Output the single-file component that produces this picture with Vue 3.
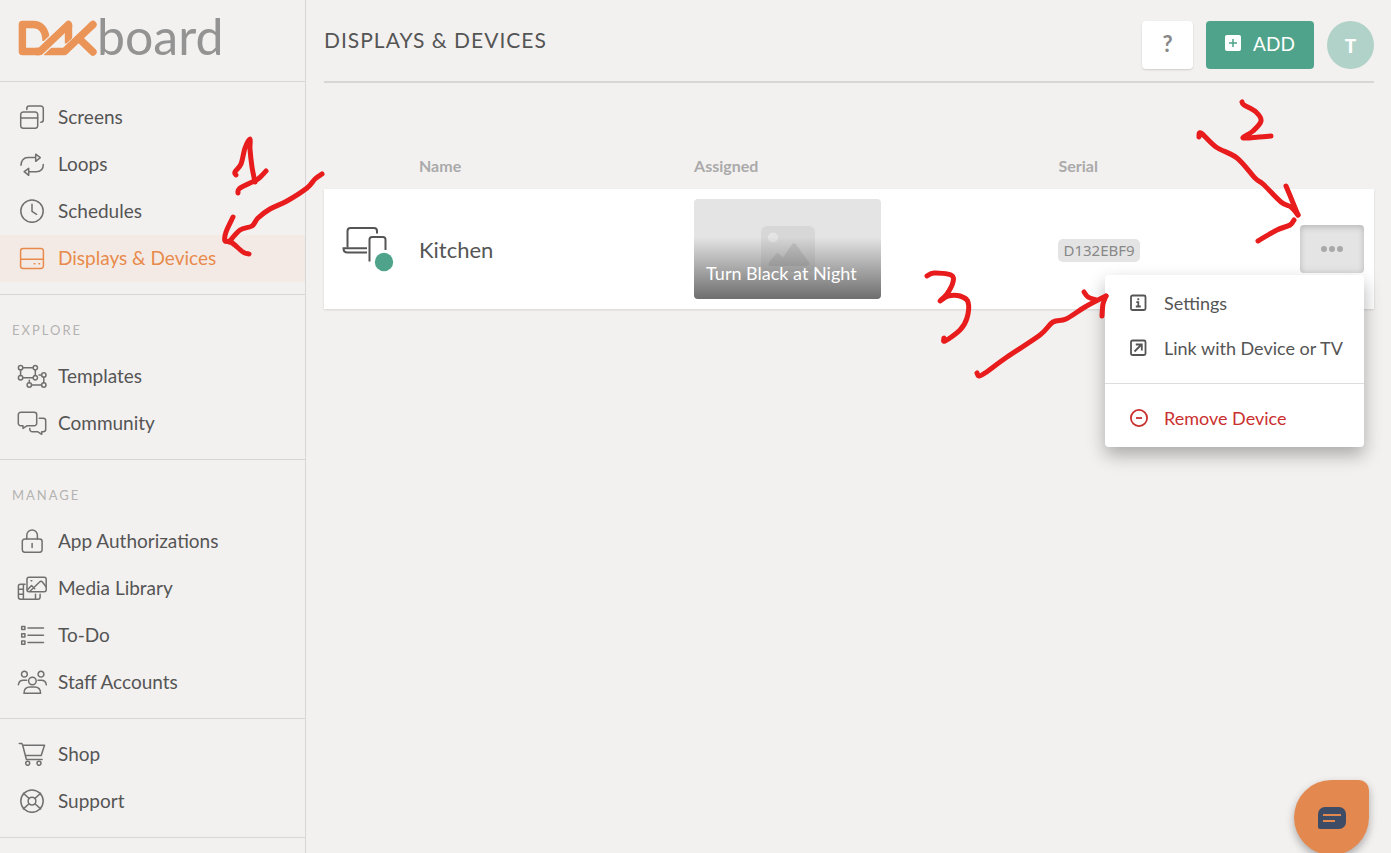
<script setup>
import { ref } from 'vue'

const groups = [
  {
    title: '',
    items: [
      {
        label: 'Screens',
        icon: [
          'M6.2 7h12a2.5 2.5 0 0 1 2.5 2.5v11.300a2.500 2.500 0 0 1-2.500 2.500h-12a2.500 2.500 0 0 1-2.500-2.500v-11.300a2.500 2.500 0 0 1 2.500-2.500z',
          'M3.700 13h17M9.800 4.500v-1a2.500 2.500 0 0 1 2.500-2.500h11.500a2.500 2.500 0 0 1 2.500 2.500v11.300a2.500 2.500 0 0 1-2.500 2.500'
        ]
      },
      {
        label: 'Loops',
        icon: [
          'M4 13.200c0-4.700 2.600-7.600 7-7.600h7.700M18.700 2.200l4.600 3.400l-4.600 3.700z',
          'M26.300 12.500c0 4.500-2.700 7.200-7 7.200h-7.500M11.700 16.300l-4.500 3.400l4.500 3.600z'
        ]
      },
      {
        label: 'Schedules',
        icon: ['M15 .9a11.200 11.200 0 1 0 0 22.400a11.200 11.200 0 1 0 0-22.400z', 'M15 5.300v7l4.600 3']
      },
      {
        label: 'Displays & Devices',
        active: true,
        icon: [
          'M6 2.600h18a2.400 2.400 0 0 1 2.400 2.400v15a2.400 2.400 0 0 1-2.400 2.400h-18a2.400 2.400 0 0 1-2.400-2.400v-15a2.400 2.400 0 0 1 2.400-2.400zM3.700 13.300h22.600',
          'M17.200 17.800h.7M21.900 17.800h.7'
        ]
      }
    ]
  },
  {
    title: 'Explore',
    items: [
      {
        label: 'Templates',
        icon: [
          'M1.400 3.700a2.200 2.200 0 1 0 4.400 0a2.200 2.200 0 1 0-4.400 0zM16.100 3.700a2.200 2.200 0 1 0 4.400 0a2.200 2.200 0 1 0-4.400 0zM1.400 13.700a2.200 2.200 0 1 0 4.400 0a2.200 2.200 0 1 0-4.400 0zM16.100 13.700a2.200 2.200 0 1 0 4.400 0a2.200 2.200 0 1 0-4.400 0z',
          'M24.600 11a2.200 2.200 0 1 0 4.400 0a2.200 2.200 0 1 0-4.400 0zM10.100 21a2.200 2.200 0 1 0 4.400 0a2.200 2.200 0 1 0-4.400 0zM24.600 21a2.200 2.200 0 1 0 4.400 0a2.200 2.200 0 1 0-4.400 0z',
          'M5.900 3.700h10.100M5.900 13.700h10.100M3.600 6v5.400M18.300 6v5.400M26.800 13.300v5.400M14.600 21h9.900M22 11h2.500M12.300 18.700v-2.500'
        ]
      },
      {
        label: 'Community',
        icon: [
          'M3.800 1.300h13.400a2.500 2.500 0 0 1 2.500 2.500v8.400a2.500 2.500 0 0 1-2.500 2.500h-7l-4.200 2.700v-2.700h-2.200a2.500 2.500 0 0 1-2.500-2.500v-8.400a2.500 2.500 0 0 1 2.500-2.500z',
          'M22.300 7.300h3.900a2.500 2.500 0 0 1 2.500 2.500v8.400a2.500 2.500 0 0 1-2.500 2.500h-1.500v2.600l-4.200-2.600h-5.200a2.500 2.500 0 0 1-2.500-2.500v-.7'
        ]
      }
    ]
  },
  {
    title: 'Manage',
    items: [
      {
        label: 'App Authorizations',
        icon: [
          'M7.800 10h14.800a2.500 2.500 0 0 1 2.500 2.500v8.300a2.500 2.500 0 0 1-2.500 2.500h-14.800a2.500 2.500 0 0 1-2.500-2.500v-8.300a2.500 2.500 0 0 1 2.500-2.500z',
          'M9.800 10v-3.700a5.300 5.300 0 0 1 10.600 0v3.700M15.100 14.500v4'
        ]
      },
      {
        label: 'Media Library',
        icon: [
          'M12 1.300h15.200a2 2 0 0 1 2 2v10.400a2 2 0 0 1-2 2h-15.200a2 2 0 0 1-2-2v-10.400a2 2 0 0 1 2-2z',
          'M10.500 13.800l4-4.300l3.200 3.300M13 15.300l9.300-9c1.200-1.300 2.200-1.300 3.300 0l3.400 4.500M14.100 4.700h.7',
          'M8 8.200h-4.500a2.100 2.100 0 0 0-2.100 2.100v10.800a2.100 2.100 0 0 0 2.100 2.100h17.500a2.100 2.100 0 0 0 2.100-2.100v-2.900M6.400 8.200v15M18.500 18.200v5M1.400 13.200h5M1.400 18.200h5'
        ]
      },
      {
        label: 'To-Do',
        icon: [
          'M4.700 3.400h3.200v3.200h-3.200zM4.700 10.700h3.200v3.200h-3.200zM4.700 18h3.200v3.200h-3.200z',
          'M11 5h15.500M11 12.300h15.500M11 19.600h15.500'
        ]
      },
      {
        label: 'Staff Accounts',
        icon: [
          'M4.500 4.200a2.900 2.900 0 1 0 5.800 0a2.900 2.900 0 1 0-5.800 0zM21.100 4.200a2.900 2.900 0 1 0 5.800 0a2.900 2.900 0 1 0-5.800 0zM11.600 11a3.800 3.800 0 1 0 7.600 0a3.800 3.800 0 1 0-7.600 0z',
          'M1.400 14.800c.3-3 2.300-4.500 5-4.500h3.300M29.300 14.800c-.3-3-2.300-4.500-5-4.500h-3.300M7 23.300c0-4 2.500-6.300 6-6.300h4.500c3.600 0 6.100 2.300 6.100 6.300z'
        ]
      }
    ]
  },
  {
    title: '',
    items: [
      {
        label: 'Shop',
        icon: [
          'M2.300 1.500h2.600l.8 1.700l3.700 14.300h15.700M5.700 3.200h21.800l-3.300 10.200h-15.800',
          'M8.700 21.300a2 2 0 1 0 4 0a2 2 0 1 0-4 0zM20 21.300a2 2 0 1 0 4 0a2 2 0 1 0-4 0z'
        ]
      },
      {
        label: 'Support',
        icon: [
          'M15 .9a11.200 11.200 0 1 0 0 22.400a11.200 11.200 0 1 0 0-22.400zM15 8.200a3.900 3.900 0 1 0 0 7.800a3.900 3.900 0 1 0 0-7.800z',
          'M6.400 4.300l5.600 5.100M23.600 4.300l-5.600 5.100M6.400 19.900l5.600-5.100M23.600 19.900l-5.600-5.100'
        ]
      }
    ]
  }
]

const devices = [{ name: 'Kitchen', assigned: 'Turn Black at Night', serial: 'D132EBF9' }]
const menuOpen = ref(true)

// Freehand notes drawn over the page, as sampled pen positions.
const strokes = [
  [[236, 175], [235, 172], [241, 164], [245, 148], [250, 139], [250, 149], [252, 167], [255, 182]],
  [[238, 193], [239, 189], [248, 184], [258, 179], [266, 171]],
  [[322, 174], [315, 179], [307, 188], [287, 201], [270, 209], [258, 218], [252, 226], [240, 230], [229, 242]],
  [[233, 217], [226, 232], [225, 241], [231, 242], [243, 252], [249, 254]],
  [[1242, 102], [1244, 105], [1256, 112], [1261, 121], [1253, 131], [1243, 138], [1259, 137], [1271, 136]],
  [[1199, 137], [1201, 133], [1216, 147], [1237, 158], [1255, 178], [1263, 184], [1281, 202], [1291, 207], [1298, 215]],
  [[1286, 186], [1291, 198], [1298, 215]],
  [[1294, 220], [1290, 225], [1277, 230], [1258, 241]],
  [[927, 276], [934, 273], [951, 275], [953, 282], [947, 294], [940, 301], [948, 296], [960, 296], [968, 302], [967, 318], [960, 330], [945, 341], [944, 338]],
  [[977, 373], [979, 376], [985, 373], [1007, 357], [1040, 335], [1053, 322], [1066, 319], [1085, 307], [1106, 296]],
  [[1084, 292], [1088, 297], [1096, 300]],
  [[1106, 296], [1103, 304], [1102, 316]]
]

function smooth(points) {
  let d = `M${points[0][0]} ${points[0][1]}`
  for (let i = 0; i < points.length - 1; i++) {
    const a = points[Math.max(i - 1, 0)]
    const b = points[i]
    const c = points[i + 1]
    const e = points[Math.min(i + 2, points.length - 1)]
    d += `C${b[0] + (c[0] - a[0]) / 6} ${b[1] + (c[1] - a[1]) / 6} ${c[0] - (e[0] - b[0]) / 6} ${c[1] - (e[1] - b[1]) / 6} ${c[0]} ${c[1]}`
  }
  return d
}
</script>

<template>
  <div class="app">
    <aside class="sidebar">
      <a class="brand" href="#" aria-label="DAKboard">
        <svg class="logo" width="240" height="60" viewBox="0 -10 240 60">
          <g fill="none" stroke="#ea9557" stroke-width="7.400" stroke-linejoin="round">
            <path d="M28 21c0-11-5-16.500-13.300-16.500h-10.300v27h17" />
            <path d="M50.500 4.500v19" />
            <path d="M23 24.800l12-11.400M45 28l12-11.400" stroke="#f3f1f0" stroke-width="1.500" />
            <path d="M26 31.500h20.500l28.500-27M60.500 17.500" />
            <path d="M61 18.500l14 13.500M73 6.400l2-1.900" stroke-linecap="round" />
            <path d="M20 39.200l17-16.100" stroke="#f3f1f0" stroke-width="1.500" />
            <path d="M18 31.500h4l28.500-27v3" />
          </g>
          <text x="79" y="35">board</text>
        </svg>
      </a>
      <nav>
        <section v-for="(group, g) in groups" :key="g" class="group">
          <h2 v-if="group.title">{{ group.title }}</h2>
          <a v-for="item in group.items" :key="item.label" href="#" class="item" :class="{ active: item.active }">
            <svg width="30" height="24" viewBox="0 0 30 24"><path v-for="d in item.icon" :key="d" :d="d" /></svg>
            <span>{{ item.label }}</span>
          </a>
        </section>
      </nav>
    </aside>

    <main>
      <header>
        <h1>Displays &amp; Devices</h1>
        <div class="tools">
          <button class="help" type="button" aria-label="Help">?</button>
          <button class="add" type="button">
            <svg width="16" height="16" viewBox="0 0 16 16">
              <rect width="16" height="16" rx="2" fill="#fff" />
              <path d="M8 4v8M4 8h8" stroke="#4fa38b" stroke-width="1.500" />
            </svg>
            <span>ADD</span>
          </button>
          <button class="avatar" type="button">T</button>
        </div>
      </header>

      <table>
        <thead>
          <tr>
            <th class="c-icon"></th>
            <th class="c-name">Name</th>
            <th class="c-assigned">Assigned</th>
            <th>Serial</th>
            <th class="c-action"></th>
          </tr>
        </thead>
        <tbody>
          <tr v-for="device in devices" :key="device.serial">
            <td class="c-icon">
              <svg class="device" width="54" height="48" viewBox="0 0 54 48" fill="none" stroke="#555" stroke-width="2">
                <path d="M5.500 22.500v-16.500a3 3 0 0 1 3-3h23.500a3 3 0 0 1 3 3v2.500" />
                <path d="M25 23.200h-23.500c0 2.800 1.500 4.300 4 4.300h19.500" />
                <path d="M27.500 36.500v-22a2.500 2.500 0 0 1 2.500-2.500h11a2.500 2.500 0 0 1 2.500 2.500v10.500" />
                <circle cx="42" cy="37" r="9.200" fill="#4fa38b" stroke="none" />
              </svg>
            </td>
            <td class="name">{{ device.name }}</td>
            <td>
              <a class="thumb" href="#">
                <svg width="54" height="46" viewBox="0 0 54 46">
                  <rect width="54" height="46" rx="6" fill="#d7d7d7" />
                  <circle cx="12" cy="11.500" r="5" fill="#e4e4e4" />
                  <path d="M9 40q-3-1 0-5l6-7q1.500-2 3 0l4 3.500l9-13q2-3 4 0l13 18q1.500 3-2 3.500z" fill="#c4c4c4" />
                </svg>
                <span>{{ device.assigned }}</span>
              </a>
            </td>
            <td><code>{{ device.serial }}</code></td>
            <td>
              <div class="action">
                <button class="more" type="button" aria-label="More" @click="menuOpen = !menuOpen">
                  <svg width="24" height="8" viewBox="0 0 24 8" fill="#a9a9a9">
                    <circle cx="4" cy="4" r="3" /><circle cx="12" cy="4" r="3" /><circle cx="20" cy="4" r="3" />
                  </svg>
                </button>
                <div v-if="menuOpen" class="menu">
                  <button type="button">
                    <svg width="18" height="18" viewBox="0 0 18 18">
                      <rect x="1" y="1.500" width="14.500" height="14.500" rx="1.500" />
                      <path d="M8.300 4.200v2M6.300 8.200h2v4.200M5.800 12.500h5" />
                    </svg>
                    <span>Settings</span>
                  </button>
                  <button type="button">
                    <svg width="18" height="18" viewBox="0 0 18 18">
                      <rect x="1" y="1.500" width="14.500" height="14.500" rx="1.500" />
                      <path d="M4.500 12.500l6.500-6.500M5.800 5.500h6v6" />
                    </svg>
                    <span>Link with Device or TV</span>
                  </button>
                  <hr />
                  <button type="button" class="danger">
                    <svg width="18" height="18" viewBox="0 0 18 18">
                      <circle cx="9" cy="9" r="8.100" /><path d="M6 9h6" />
                    </svg>
                    <span>Remove Device</span>
                  </button>
                </div>
              </div>
            </td>
          </tr>
        </tbody>
      </table>
    </main>

    <button class="chat" type="button" aria-label="Chat">
      <svg width="28" height="22" viewBox="0 0 28 22">
        <path d="M7 0h14a7 7 0 0 1 7 7v8a7 7 0 0 1-7 7h-19a2 2 0 0 1-2-2v-13a7 7 0 0 1 7-7z" fill="#3e4c66" />
        <path d="M5 8h18M5 14h12" stroke="#e38950" stroke-width="2" />
      </svg>
    </button>

    <svg class="notes" width="1391" height="400" viewBox="0 0 1391 400">
      <path v-for="(s, i) in strokes" :key="i" :d="smooth(s)" />
    </svg>
  </div>
</template>

<style>
body {
  background: #f3f1f0;
}
</style>

<style scoped>
.app {
  position: relative;
  display: flex;
  height: 100vh;
  overflow: hidden;
  background: #f3f1f0;
  color: #555;
  font-family: Lato, "Open Sans", sans-serif;
  font-size: 19px;
}
a {
  color: inherit;
  text-decoration: none;
}
button {
  border: 0;
  padding: 0;
  font: inherit;
  color: inherit;
  cursor: pointer;
}
.sidebar {
  box-sizing: border-box;
  flex: 0 0 306px;
  border-right: 1px solid #d6d6d6;
  overflow: hidden;
}
.brand {
  display: block;
  height: 71px;
  padding: 10px 0 0 18px;
  border-bottom: 1px solid #d6d6d6;
}
.logo {
  display: block;
}
.logo text {
  font-family: Lato, sans-serif;
  font-size: 50px;
  fill: #939393;
}
.group {
  padding: 12px 0;
  border-bottom: 1px solid #d6d6d6;
}
.group h2 {
  margin: 0;
  padding: 12px 12px 0;
  height: 34px;
  font-size: 13px;
  line-height: 22px;
  font-weight: 400;
  letter-spacing: 2px;
  text-transform: uppercase;
  color: #b3b3b1;
}
.item {
  box-sizing: border-box;
  display: flex;
  align-items: center;
  gap: 11px;
  height: 47px;
  padding: 0 0 2px 17px;
}
.item.active {
  background: #f3eae5;
  color: #e88a4c;
}
.item svg {
  fill: none;
  stroke: #707070;
  stroke-width: 1.500;
  stroke-linejoin: round;
  stroke-linecap: round;
}
.item.active svg {
  stroke: #e88a4c;
}
main {
  flex: 1;
  min-width: 0;
  padding: 0 17px 0 18px;
}
header {
  display: flex;
  justify-content: space-between;
  height: 60px;
  padding-top: 21px;
  border-bottom: 2px solid #d6d6d6;
}
h1 {
  margin: 0;
  font-size: 21px;
  line-height: 38px;
  font-weight: 400;
  letter-spacing: 1px;
  text-transform: uppercase;
}
.tools {
  display: flex;
  gap: 13px;
  height: 48px;
}
.help {
  width: 51px;
  padding-bottom: 4px;
  border-radius: 4px;
  background: #fff;
  box-shadow: 0 1px 2px rgba(0, 0, 0, 0.15);
  color: #888;
  font-size: 22px;
  font-weight: 700;
}
.add {
  display: flex;
  align-items: center;
  justify-content: center;
  gap: 12px;
  width: 108px;
  padding-bottom: 4px;
  border-radius: 4px;
  background: #4fa38b;
  color: #fff;
}
.avatar {
  width: 47px;
  border-radius: 50%;
  background: #b1d2c8;
  color: #fff;
  font-weight: 900;
}
table {
  width: 100%;
  margin-top: 60px;
  border-collapse: collapse;
  table-layout: fixed;
}
th {
  height: 44px;
  padding: 0 0 2px;
  text-align: left;
  font-size: 16px;
  color: #aaa;
}
td {
  height: 120px;
  padding: 0;
}
tbody tr {
  background: #fff;
  box-shadow: 0 1px 2px rgba(0, 0, 0, 0.12);
}
.c-icon {
  width: 95px;
}
.c-name {
  width: 26.200%;
}
.c-assigned {
  width: 34.700%;
}
.c-action {
  width: 74px;
}
.device {
  display: block;
  margin-left: 18px;
}
.name {
  font-size: 22px;
}
.thumb {
  position: relative;
  display: block;
  width: 187px;
  height: 100px;
  border-radius: 4px;
  overflow: hidden;
  background: #e4e4e4;
  color: #fff;
  font-size: 18px;
}
.thumb svg {
  display: block;
  margin: 27px auto 0;
}
.thumb span {
  position: absolute;
  inset: 38px 0 0;
  padding: 24px 12px 0;
  line-height: 24px;
  white-space: nowrap;
  background: linear-gradient(rgba(80, 80, 80, 0), rgba(80, 80, 80, 0.8));
}
code {
  display: inline-block;
  padding: 0 5px;
  border-radius: 5px;
  background: #e4e4e4;
  color: #888;
  font-family: "Noto Sans", sans-serif;
  font-size: 15px;
  line-height: 23px;
}
.action {
  position: relative;
  width: 64px;
}
.more {
  display: flex;
  align-items: center;
  justify-content: center;
  width: 64px;
  height: 48px;
  border-radius: 4px;
  background: #e4e4e4;
  box-shadow: inset 0 2px 6px rgba(0, 0, 0, 0.2);
}
.menu {
  position: absolute;
  z-index: 2;
  top: 50px;
  right: 0;
  width: 259px;
  padding: 6px 0;
  border-radius: 4px;
  background: #fff;
  box-shadow: 0 8px 18px rgba(0, 0, 0, 0.3);
}
.menu button {
  display: flex;
  align-items: center;
  gap: 16px;
  width: 100%;
  height: 45px;
  padding: 0 0 2px 25px;
  background: none;
  font-size: 18px;
  white-space: nowrap;
}
.menu svg {
  fill: none;
  stroke: currentColor;
  stroke-width: 1.800;
}
.menu hr {
  margin: 12px 0;
  border: 0;
  border-top: 1px solid #ddd;
}
.menu .danger {
  color: #ca2f2f;
}
.chat {
  position: fixed;
  right: 22px;
  bottom: -2px;
  display: flex;
  align-items: center;
  justify-content: center;
  width: 75px;
  height: 75px;
  border-radius: 50% 10px 50% 50%;
  background: #e38950;
  box-shadow: 0 4px 8px rgba(0, 0, 0, 0.3);
}
.notes {
  position: absolute;
  z-index: 3;
  top: 0;
  left: 0;
  pointer-events: none;
  fill: none;
  stroke: #e81c1c;
  stroke-width: 5;
  stroke-linecap: round;
  stroke-linejoin: round;
}
</style>
